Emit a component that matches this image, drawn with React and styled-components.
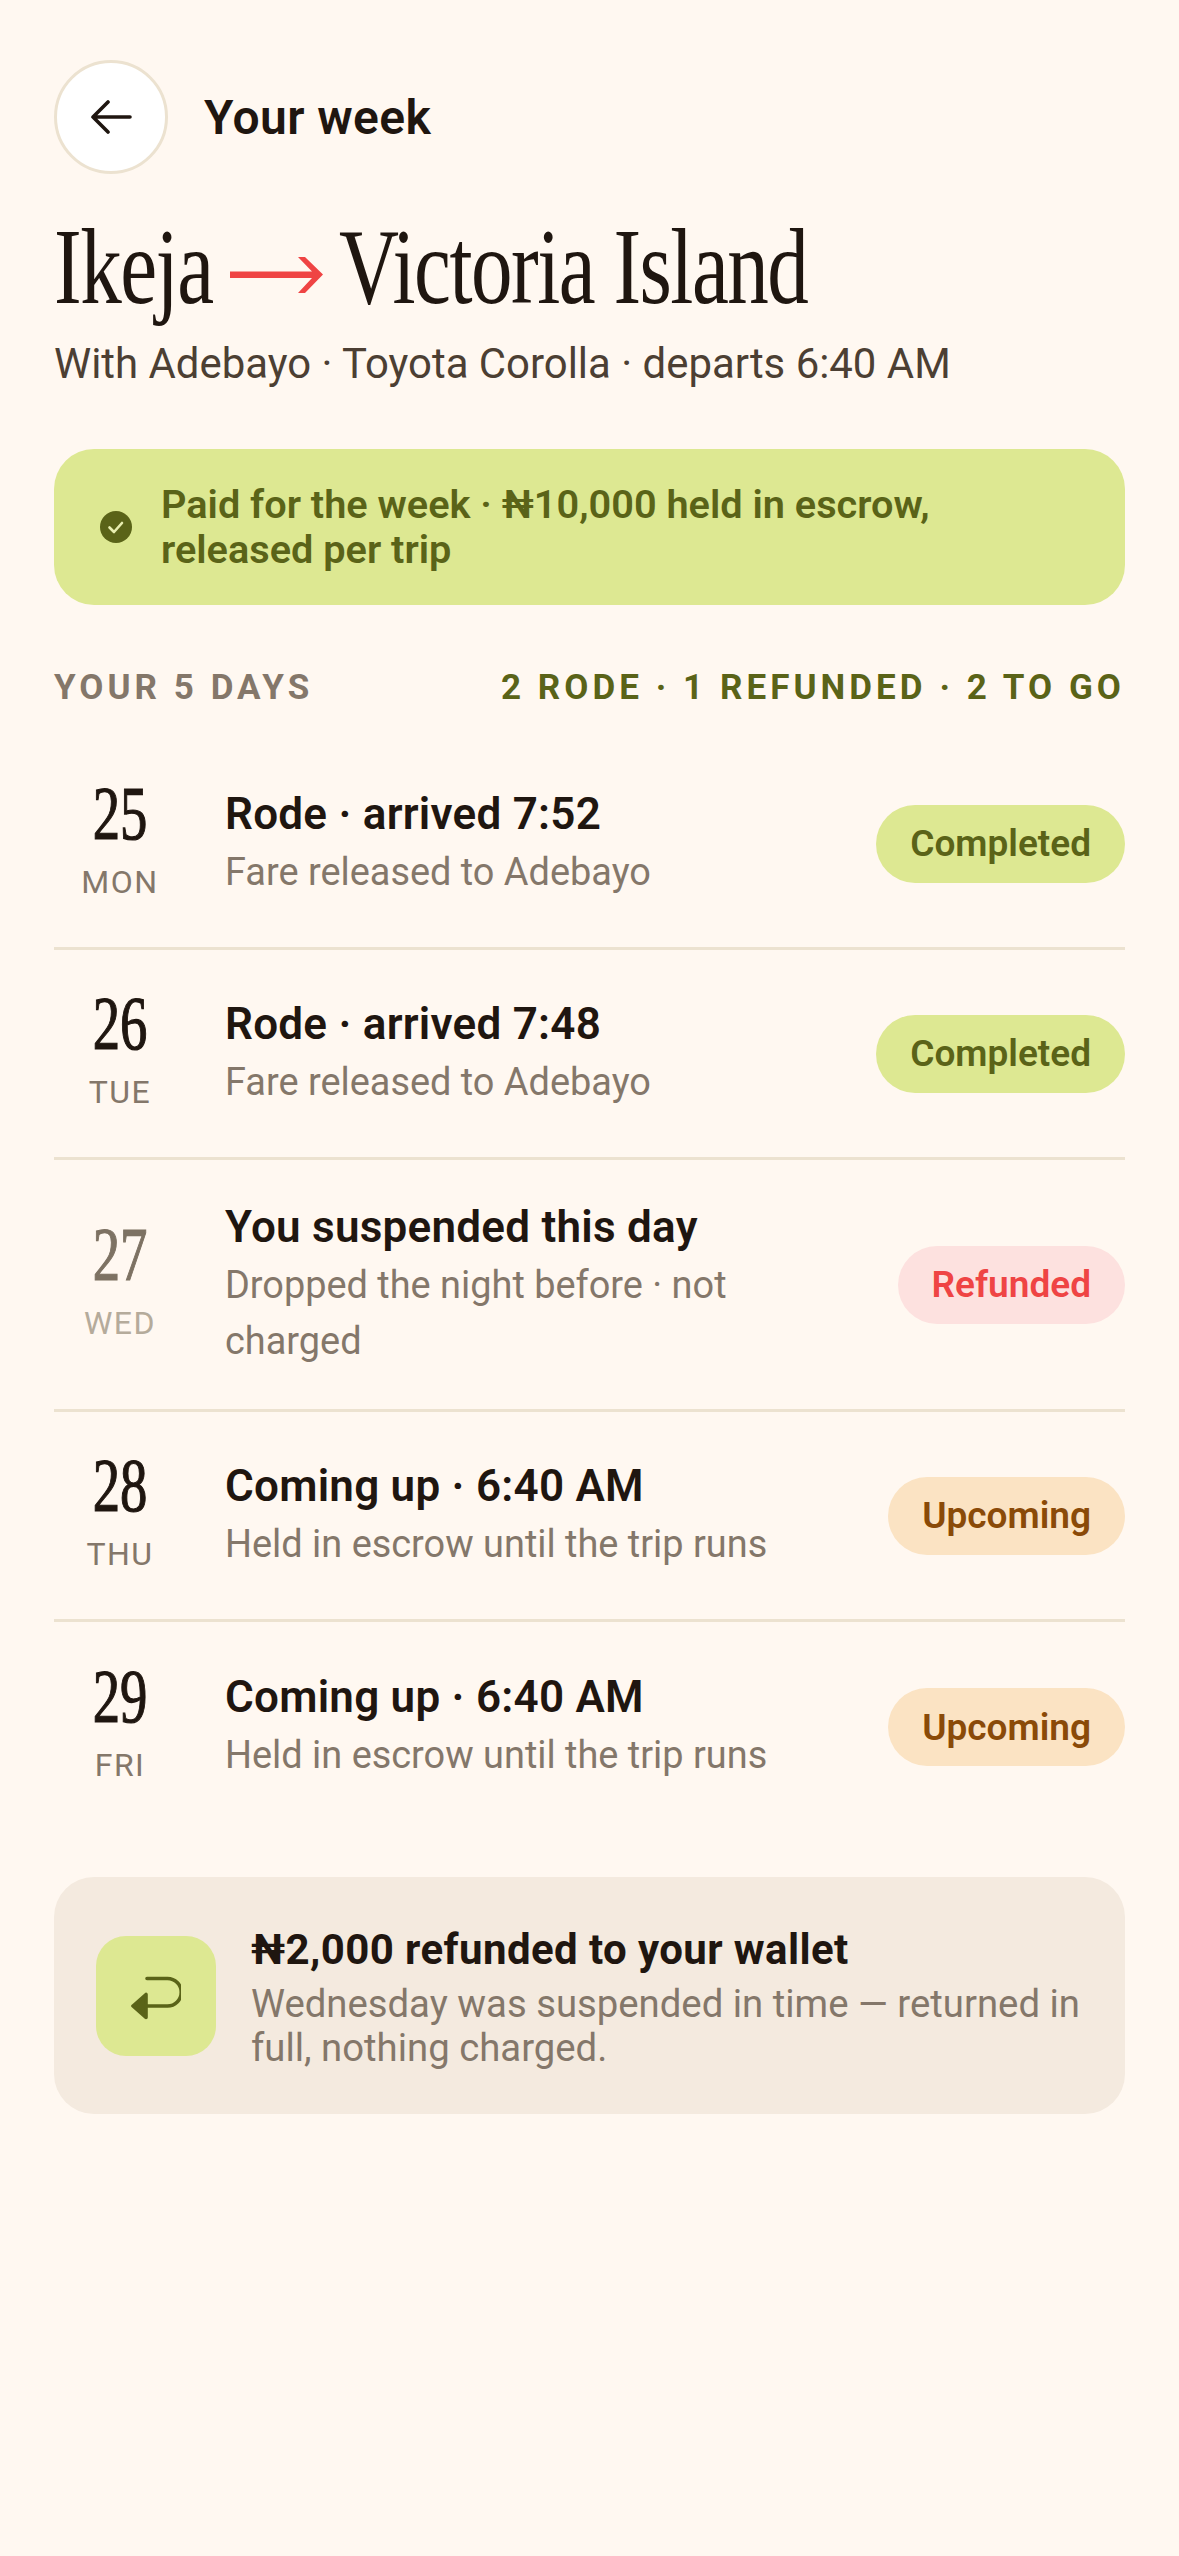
import React from "react";
import styled, { createGlobalStyle } from "styled-components";

const Global = createGlobalStyle`
  * { box-sizing: border-box; }
  html, body { margin: 0; background: #fff8f1; }
  body { font-family: "Roboto", sans-serif; color: #1f1610; }
`;

const Page = styled.div`
  width: 1179px;
  min-height: 2556px;
  padding: 60px 54px 0;
  background: #fff8f1;
`;

const Header = styled.div`
  display: flex;
  align-items: center;
  gap: 36px;
`;

const BackButton = styled.button`
  width: 114px;
  height: 114px;
  border-radius: 50%;
  border: 3px solid #ece2d0;
  background: #ffffff;
  display: flex;
  align-items: center;
  justify-content: center;
  padding: 0;
`;

const HeaderTitle = styled.div`
  font-size: 48px;
  font-weight: 600;
  letter-spacing: 0.4px;
`;

const Route = styled.h1`
  margin: 38px 0 0;
  display: flex;
  align-items: center;
  height: 110px;
  font-family: "Liberation Serif", serif;
  font-weight: 400;
  font-size: 108px;
  line-height: 110px;
  letter-spacing: -2px;
  white-space: nowrap;
`;

// no condensed serif is installed, so the wide one is squeezed
const Squeezed = styled.span`
  display: block;
  flex: none;
  width: ${(p) => p.$w}px;
  transform: scaleX(0.77);
  transform-origin: left center;
`;

const RouteArrow = styled.svg`
  flex: none;
  margin: 15px 16px 0 16px;
`;

const Sub = styled.div`
  margin-top: 14px;
  font-size: 41.9px;
  line-height: 56px;
  color: #4c3f33;
`;

const Banner = styled.div`
  margin-top: 57px;
  background: #dde892;
  border-radius: 40px;
  padding: 33px 46px;
  height: 156px;
  display: flex;
  align-items: center;
  gap: 29px;
  font-size: 39.7px;
  font-weight: 600;
  line-height: 45px;
  color: #5a6318;
`;

const SectionRow = styled.div`
  margin-top: 63px;
  display: flex;
  justify-content: space-between;
  font-size: 35px;
  line-height: 40px;
  font-weight: 700;
  letter-spacing: 4.05px;
`;

const SectionLabel = styled.span`
  color: ${(p) => p.$color};
`;

const Rows = styled.div`
  margin-top: 32px;
`;

const Row = styled.div`
  display: flex;
  align-items: center;
  height: ${(p) => (p.$tall ? 252 : 210)}px;
  border-bottom: ${(p) => (p.$last ? "none" : "3px solid #ece2d0")};
`;

const DateCol = styled.div`
  width: 132px;
  margin-right: 39px;
  padding-bottom: 8px;
  display: flex;
  flex-direction: column;
  align-items: center;
  flex-shrink: 0;
  color: ${(p) => (p.$muted ? "#7d7263" : "#1f1610")};
`;

const DayNum = styled.div`
  font-family: "Liberation Serif", serif;
  font-size: 76px;
  line-height: 70px;
  transform: scaleX(0.72);
  -webkit-text-stroke: 1.2px currentColor;
`;

const DayName = styled.div`
  margin-top: 14px;
  font-size: 32px;
  line-height: 40px;
  letter-spacing: 1.5px;
  color: ${(p) => (p.$muted ? "#b5ab9b" : "#84776a")};
`;

const RowBody = styled.div`
  flex: 1;
  min-width: 0;
  padding-bottom: 4px;
`;

const RowTitle = styled.div`
  font-size: 44px;
  font-weight: 600;
  line-height: 60px;
  letter-spacing: 0.25px;
`;

const RowText = styled.div`
  font-size: 37.9px;
  line-height: 56px;
  color: #84776a;
  max-width: 600px;
`;

const tones = {
  done: ["#dde892", "#5a6318"],
  refund: ["#fde1df", "#ef4444"],
  soon: ["#fbe3c3", "#8a4a08"],
};

const Pill = styled.div`
  height: 78px;
  padding: 0 34px;
  border-radius: 39px;
  display: flex;
  align-items: center;
  font-size: 37px;
  font-weight: 600;
  background: ${(p) => tones[p.$tone][0]};
  color: ${(p) => tones[p.$tone][1]};
`;

const Card = styled.div`
  margin-top: 45px;
  height: 237px;
  background: #f4eadf;
  border-radius: 40px;
  padding: 0 42px;
  display: flex;
  align-items: center;
  gap: 35px;
`;

const IconTile = styled.div`
  width: 120px;
  height: 120px;
  border-radius: 30px;
  background: #dde892;
  display: flex;
  align-items: center;
  justify-content: center;
  flex-shrink: 0;
`;

const CardTitle = styled.div`
  font-size: 42px;
  font-weight: 700;
  line-height: 56px;
  letter-spacing: 0.4px;
`;

const CardText = styled.div`
  margin-top: 4px;
  font-size: 38.3px;
  line-height: 44px;
  color: #84776a;
`;

const days = [
  { n: 25, d: "MON", t: "Rode · arrived 7:52", s: "Fare released to Adebayo", tone: "done", label: "Completed" },
  { n: 26, d: "TUE", t: "Rode · arrived 7:48", s: "Fare released to Adebayo", tone: "done", label: "Completed" },
  { n: 27, d: "WED", t: "You suspended this day", s: "Dropped the night before · not charged", tone: "refund", label: "Refunded", muted: true },
  { n: 28, d: "THU", t: "Coming up · 6:40 AM", s: "Held in escrow until the trip runs", tone: "soon", label: "Upcoming" },
  { n: 29, d: "FRI", t: "Coming up · 6:40 AM", s: "Held in escrow until the trip runs", tone: "soon", label: "Upcoming" },
];

export default function App() {
  return (
    <Page>
      <Global />
      <Header>
        <BackButton>
          <svg width="42" height="34" viewBox="0 0 42 34" fill="none" stroke="#1f1610" strokeWidth="3.6" strokeLinecap="round" strokeLinejoin="round">
            <path d="M40 17H3M18 2 3 17l15 15" />
          </svg>
        </BackButton>
        <HeaderTitle>Your week</HeaderTitle>
      </Header>
      <Route>
        <Squeezed $w={160}>Ikeja</Squeezed>
        <RouteArrow width="93" height="36" viewBox="0 0 93 36" fill="#ef4444">
          <path d="M68 0h7l18 17.500-18 18.500h-7l14-15H0v-6.500h82z" />
        </RouteArrow>
        <Squeezed $w={470}>Victoria Island</Squeezed>
      </Route>
      <Sub>With Adebayo · Toyota Corolla · departs 6:40 AM</Sub>
      <Banner>
        <svg width="32" height="32" viewBox="0 0 32 32" style={{ flexShrink: 0 }}>
          <circle cx="16" cy="16" r="16" fill="#5a6318" />
          <path d="M9.500 16.500l4.500 4.500 8-9" fill="none" stroke="#e8eeb0" strokeWidth="2.6" strokeLinecap="round" strokeLinejoin="round" />
        </svg>
        <span>Paid for the week · ₦10,000 held in escrow, released per trip</span>
      </Banner>
      <SectionRow>
        <SectionLabel $color="#84776a">YOUR 5 DAYS</SectionLabel>
        <SectionLabel $color="#5a6318">2 RODE · 1 REFUNDED · 2 TO GO</SectionLabel>
      </SectionRow>
      <Rows>
        {days.map((day, i) => (
          <Row key={day.n} $tall={day.muted} $last={i === days.length - 1}>
            <DateCol $muted={day.muted}>
              <DayNum>{day.n}</DayNum>
              <DayName $muted={day.muted}>{day.d}</DayName>
            </DateCol>
            <RowBody>
              <RowTitle>{day.t}</RowTitle>
              <RowText>{day.s}</RowText>
            </RowBody>
            <Pill $tone={day.tone}>{day.label}</Pill>
          </Row>
        ))}
      </Rows>
      <Card>
        <IconTile>
          <svg width="50" height="48" viewBox="0 0 50 48" fill="none" stroke="#5a6318" strokeWidth="3.6" strokeLinecap="round" strokeLinejoin="round">
            <path d="M16 6.500h20.500a13.750 13.750 0 0 1 0 27.500H15" />
            <path d="M15 22.500v23L2 34z" fill="#5a6318" />
          </svg>
        </IconTile>
        <div>
          <CardTitle>₦2,000 refunded to your wallet</CardTitle>
          <CardText>Wednesday was suspended in time — returned in full, nothing charged.</CardText>
        </div>
      </Card>
    </Page>
  );
}
